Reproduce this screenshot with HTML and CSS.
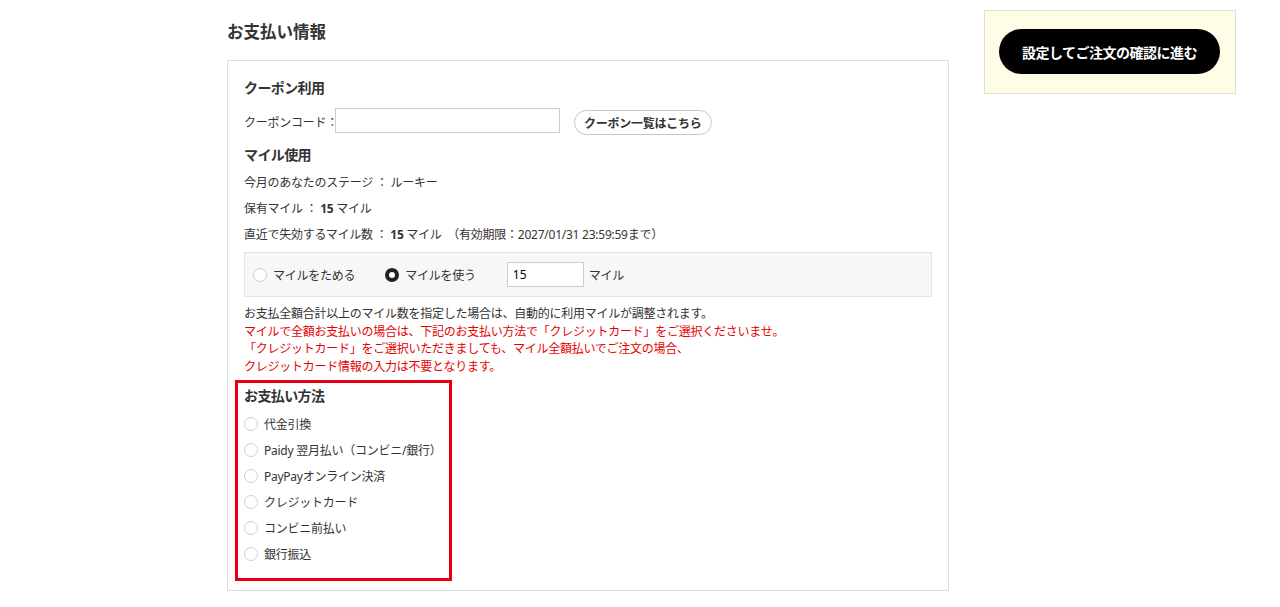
FILE: index.html
```html
<!DOCTYPE html>
<html lang="ja">
<head>
    <meta charset="UTF-8">
    <meta name="viewport" content="width=device-width, initial-scale=1.0">
    <title>お支払い情報</title>
    <link rel="stylesheet" href="styles.css">
</head>
<body>
    <div class="page">
        <div class="main">
            <h2 class="page-title">お支払い情報</h2>
            <div class="panel">
                <h3 class="sub-title">クーポン利用</h3>
                <div class="coupon-row">
                    <label class="coupon-label" for="couponCode">クーポンコード：</label>
                    <input class="coupon-input" type="text" id="couponCode">
                    <button class="pill-button" type="button">クーポン一覧はこちら</button>
                </div>

                <h3 class="sub-title mile-title">マイル使用</h3>
                <p class="info-line">今月のあなたのステージ ： ルーキー</p>
                <p class="info-line">保有マイル ： <b>15</b> マイル</p>
                <p class="info-line">直近で失効するマイル数 ： <b>15</b> マイル　（有効期限：2027/01/31 23:59:59まで）</p>

                <div class="mile-box">
                    <label class="radio-item"><input type="radio" name="mile" class="radio"> マイルをためる</label>
                    <label class="radio-item use"><input type="radio" name="mile" class="radio" checked> マイルを使う</label>
                    <input class="mile-input" type="text" value="15">
                    <span class="mile-unit">マイル</span>
                </div>

                <div class="notice">
                    <p>お支払全額合計以上のマイル数を指定した場合は、自動的に利用マイルが調整されます。</p>
                    <p class="red">マイルで全額お支払いの場合は、下記のお支払い方法で「クレジットカード」をご選択くださいませ。</p>
                    <p class="red">「クレジットカード」をご選択いただきましても、マイル全額払いでご注文の場合、</p>
                    <p class="red">クレジットカード情報の入力は不要となります。</p>
                </div>

                <div class="payment">
                    <h3 class="sub-title">お支払い方法</h3>
                    <label class="pay-item"><input type="radio" name="pay" class="radio"> 代金引換</label>
                    <label class="pay-item"><input type="radio" name="pay" class="radio"> Paidy 翌月払い（コンビニ/銀行）</label>
                    <label class="pay-item"><input type="radio" name="pay" class="radio"> PayPayオンライン決済</label>
                    <label class="pay-item"><input type="radio" name="pay" class="radio"> クレジットカード</label>
                    <label class="pay-item"><input type="radio" name="pay" class="radio"> コンビニ前払い</label>
                    <label class="pay-item"><input type="radio" name="pay" class="radio"> 銀行振込</label>
                </div>
            </div>
        </div>

        <div class="side">
            <div class="side-box">
                <button class="next-button" type="button">設定してご注文の確認に進む</button>
            </div>
        </div>
    </div>
</body>
</html>
```

FILE: styles.css
```css
body {
    margin: 0;
    font-family: "Noto Sans", "Noto Sans CJK JP", sans-serif;
    color: #333;
    background: #fff;
}
.page {
    display: flex;
    align-items: flex-start;
    gap: 35px;
    padding: 10px 0 0 227px;
}
.main {
    width: 722px;
}
.page-title {
    margin: 0 0 16px;
    padding-top: 10px;
    font-size: 16.5px;
    line-height: 24px;
    font-weight: bold;
}
.panel {
    border: 1px solid #ddd;
    padding: 17px 16px 9px;
    font-size: 12px;
    letter-spacing: -0.25px;
}
.sub-title {
    margin: 0;
    font-size: 14px;
    line-height: 20px;
    font-weight: bold;
    letter-spacing: -0.6px;
}
.coupon-row {
    display: flex;
    align-items: center;
    height: 27px;
    margin-top: 10px;
}
.coupon-label {
    flex-shrink: 0;
    width: 91px;
    white-space: nowrap;
}
.coupon-input {
    box-sizing: border-box;
    width: 225px;
    height: 25px;
    margin: 0 0 2px;
    border: 1px solid #ccc;
    padding: 2px 4px;
}
.pill-button {
    box-sizing: border-box;
    margin: 2px 0 0 14px;
    height: 25px;
    padding: 0 9px;
    border: 1px solid #c8c8c8;
    border-radius: 13px;
    background: #fff;
    font-family: inherit;
    font-size: 12px;
    font-weight: bold;
    letter-spacing: -0.25px;
    color: #333;
}
.mile-title {
    margin-top: 10px;
}
.info-line {
    margin: 9px 0 0;
    line-height: 18px;
}
.info-line + .info-line {
    margin-top: 8px;
}
.info-line b {
    font-weight: bold;
}
.mile-box {
    display: flex;
    align-items: center;
    height: 43px;
    margin-top: 8px;
    padding: 0 8px;
    border: 1px solid #e3e3e3;
    background: #f7f7f7;
}
.radio-item {
    display: flex;
    align-items: center;
    gap: 6px;
}
.radio-item.use {
    margin-left: 30px;
}
.radio {
    appearance: none;
    box-sizing: border-box;
    width: 14px;
    height: 14px;
    margin: 0;
    border: 1px solid #d0d0d0;
    border-radius: 50%;
    background: #fff;
}
.radio:checked {
    border: 4px solid #222;
}
.mile-input {
    box-sizing: border-box;
    width: 77px;
    height: 25px;
    margin-left: 31px;
    border: 1px solid #ccc;
    padding: 2px 5px;
    font-family: inherit;
    font-size: 12px;
}
.mile-unit {
    margin-left: 5px;
}
.notice {
    margin-top: 8px;
    line-height: 17.7px;
}
.notice p {
    margin: 0;
}
.notice .red {
    color: #e60000;
}
.payment {
    width: 199px;
    margin: 4px 0 0 -9px;
    padding: 3px 6px 15px;
    border: 3px solid #e60012;
}
.pay-item {
    display: flex;
    align-items: center;
    gap: 6px;
    height: 18px;
    margin-top: 8px;
}
.payment .sub-title + .pay-item {
    margin-top: 9px;
}
.side {
    width: 252px;
}
.side-box {
    padding: 18px 15px 19px 14px;
    border: 1px solid #ddd;
    background: #fffde6;
}
.next-button {
    display: block;
    width: 221px;
    height: 45px;
    border: none;
    border-radius: 23px;
    background: #000;
    color: #fff;
    font-family: inherit;
    font-size: 14px;
    font-weight: bold;
    letter-spacing: -0.5px;
}
```
